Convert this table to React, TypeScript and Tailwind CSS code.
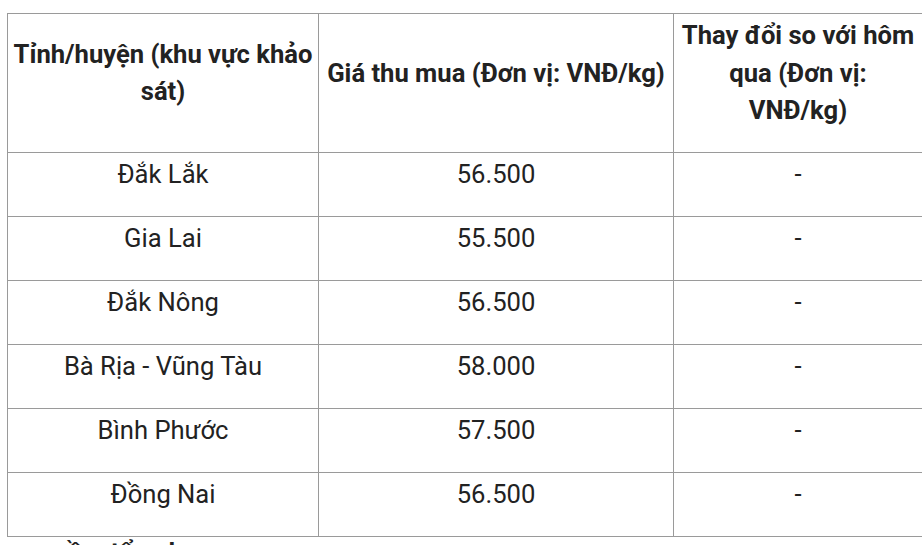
import React from "react";

const rows: [string, string, string][] = [
  ["Đắk Lắk", "56.500", "-"],
  ["Gia Lai", "55.500", "-"],
  ["Đắk Nông", "56.500", "-"],
  ["Bà Rịa - Vũng Tàu", "58.000", "-"],
  ["Bình Phước", "57.500", "-"],
  ["Đồng Nai", "56.500", "-"],
];

export default function App() {
  return (
    <div
      className="bg-white w-[922px] h-[545px] overflow-hidden pl-[7px] pt-[13px] text-[#222222]"
      style={{ fontFamily: "Roboto, 'Liberation Sans', sans-serif" }}
    >
      <table className="table-fixed border-collapse w-[915px] text-[25.6px] leading-[37.5px]">
        <colgroup>
          <col className="w-[311px]" />
          <col className="w-[355px]" />
          <col className="w-[249px]" />
        </colgroup>
        <thead>
          <tr>
            {["Tỉnh/huyện (khu vực khảo sát)", "Giá thu mua (Đơn vị: VNĐ/kg)", "Thay đổi so với hôm qua (Đơn vị: VNĐ/kg)"].map((h) => (
              <th key={h} className="border border-[#9a9a9a] px-[4px] pt-[3px] pb-[2.5px] align-middle text-center font-bold">
                <div className="mb-[20px]">{h}</div>
              </th>
            ))}
          </tr>
        </thead>
        <tbody>
          {rows.map((r) => (
            <tr key={r[0]}>
              {r.map((c, i) => (
                <td key={i} className="border border-[#9a9a9a] px-[4px] pt-[3px] pb-[2.5px] align-middle text-center font-normal">
                  <div className="mb-[20px]">{c}</div>
                </td>
              ))}
            </tr>
          ))}
        </tbody>
      </table>
      <p className="pl-[18px] pt-[4px] text-[25.6px] leading-[22px] font-bold">nguồn: tổng hợp</p>
    </div>
  );
}
